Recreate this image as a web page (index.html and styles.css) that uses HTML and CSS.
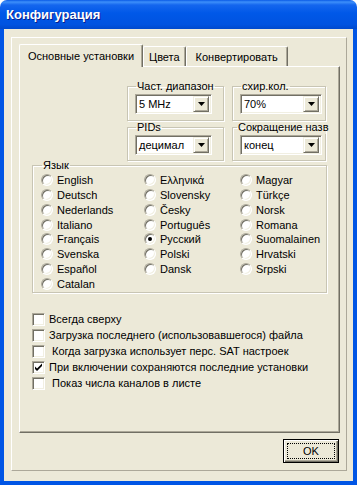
FILE: index.html
```html
<!DOCTYPE html>
<html lang="ru">
<head>
    <meta charset="UTF-8">
    <title>Конфигурация</title>
    <link rel="stylesheet" href="styles.css">
</head>
<body>

<div class="window">
    <div class="titlebar"><span class="title">Конфигурация</span></div>

    <div class="client">
        <div class="frame">
            <div class="tabs">
                <div class="tab tab-active">Основные установки</div>
                <div class="tab">Цвета</div>
                <div class="tab tab-convert">Конвертировать</div>
            </div>

            <div class="page">
                <div class="combos">
                    <fieldset class="group">
                        <legend>Част. диапазон</legend>
                        <div class="combo combo-a"><span class="combo-value">5 MHz</span><span class="combo-btn"><svg width="7" height="4" viewBox="0 0 7 4"><path d="M0 0h7L3.5 4z" fill="#000"/></svg></span></div>
                    </fieldset>
                    <fieldset class="group">
                        <legend>схир.кол.</legend>
                        <div class="combo combo-b"><span class="combo-value">70%</span><span class="combo-btn"><svg width="7" height="4" viewBox="0 0 7 4"><path d="M0 0h7L3.5 4z" fill="#000"/></svg></span></div>
                    </fieldset>
                    <fieldset class="group group-low">
                        <legend>PIDs</legend>
                        <div class="combo combo-a"><span class="combo-value">децимал</span><span class="combo-btn"><svg width="7" height="4" viewBox="0 0 7 4"><path d="M0 0h7L3.5 4z" fill="#000"/></svg></span></div>
                    </fieldset>
                    <fieldset class="group group-low">
                        <legend class="legend-wide">Сокращение назв</legend>
                        <div class="combo combo-b"><span class="combo-value">конец</span><span class="combo-btn"><svg width="7" height="4" viewBox="0 0 7 4"><path d="M0 0h7L3.5 4z" fill="#000"/></svg></span></div>
                    </fieldset>
                </div>

                <fieldset class="group lang">
                    <legend>Язык</legend>
                    <div class="radios">
                        <label class="radio"><span class="dot"></span>English</label>
                        <label class="radio"><span class="dot"></span>Ελληνικά</label>
                        <label class="radio"><span class="dot"></span>Magyar</label>
                        <label class="radio"><span class="dot"></span>Deutsch</label>
                        <label class="radio"><span class="dot"></span>Slovensky</label>
                        <label class="radio"><span class="dot"></span>Türkçe</label>
                        <label class="radio"><span class="dot"></span>Nederlands</label>
                        <label class="radio"><span class="dot"></span>Česky</label>
                        <label class="radio"><span class="dot"></span>Norsk</label>
                        <label class="radio"><span class="dot"></span>Italiano</label>
                        <label class="radio"><span class="dot"></span>Português</label>
                        <label class="radio"><span class="dot"></span>Romana</label>
                        <label class="radio"><span class="dot"></span>Français</label>
                        <label class="radio"><span class="dot dot-on"></span>Русский</label>
                        <label class="radio"><span class="dot"></span>Suomalainen</label>
                        <label class="radio"><span class="dot"></span>Svenska</label>
                        <label class="radio"><span class="dot"></span>Polski</label>
                        <label class="radio"><span class="dot"></span>Hrvatski</label>
                        <label class="radio"><span class="dot"></span>Español</label>
                        <label class="radio"><span class="dot"></span>Dansk</label>
                        <label class="radio"><span class="dot"></span>Srpski</label>
                        <label class="radio"><span class="dot"></span>Catalan</label>
                    </div>
                </fieldset>

                <ul class="checks">
                    <li><span class="box"></span>Всегда сверху</li>
                    <li><span class="box"></span>Загрузка последнего (использовавшегося) файла</li>
                    <li><span class="box"></span>&nbsp;Когда загрузка использует перс. SAT настроек</li>
                    <li><span class="box"><svg width="9" height="9" viewBox="0 0 9 9"><path d="M1 3.5l2 2 5-5v2.5L3 8 1 6z" fill="#000"/></svg></span>При включении сохраняются последние установки</li>
                    <li><span class="box"></span>&nbsp;Показ числа каналов в листе</li>
                </ul>
            </div>

            <div class="actions">
                <button class="btn">OK</button>
            </div>
        </div>
    </div>
</div>

</body>
</html>
```

FILE: styles.css
```css
body {
    margin: 0;
    font-family: "Liberation Sans", Arial, sans-serif;
    font-size: 11px;
    color: #000;
    background: #fff;
}
.window {
    width: 357px;
    height: 485px;
    display: flex;
    flex-direction: column;
}
.titlebar {
    height: 29px;
    flex: none;
    display: flex;
    align-items: center;
    padding-left: 6px;
    border-radius: 7px 7px 0 0;
    background: linear-gradient(#0a5ae6 0, #3d8ffa 2px, #1466ee 5px, #0058e8 45%, #0053e0 85%, #0049cc 100%);
}
.title {
    font-family: "Liberation Sans", Arial, sans-serif;
    font-weight: bold;
    font-size: 13px;
    color: #fff;
    text-shadow: 1px 1px 0 #0a1e8a;
}
.client {
    flex: 1;
    background-color: #ece9d8;
    border: 4px solid #0055e5;
    border-top: 0;
    padding: 8px 6px 10px 7px;
}
.frame {
    height: 434px;
    box-sizing: border-box;
    border: 1px solid;
    border-color: #fff #aca899 #aca899 #fff;
    padding: 6px 6px 7px 7px;
    display: flex;
    flex-direction: column;
}
.tabs {
    display: flex;
    align-items: flex-end;
    height: 22px;
}
.tab {
    height: 20px;
    box-sizing: border-box;
    padding: 0 5px;
    display: flex;
    align-items: center;
    border: 1px solid;
    border-color: #fff #716f64 transparent #fff;
    border-bottom: 0;
    border-radius: 2px 2px 0 0;
    box-shadow: inset -1px 0 0 #aca899;
}
.tab-convert {
    width: 102px;
    justify-content: center;
}
.tab-active {
    height: 23px;
    width: 124px;
    justify-content: center;
    margin-bottom: -1px;
    position: relative;
    z-index: 1;
    background-color: #ece9d8;
}
.page {
    height: 367px;
    box-sizing: border-box;
    border: 1px solid;
    border-color: #fff #716f64 #716f64 #fff;
    box-shadow: inset -1px -1px 0 #aca899;
}
.combos {
    display: grid;
    grid-template-columns: 97px 94px;
    column-gap: 8px;
    margin: 13px 0 0 107px;
}
.group {
    margin: 0;
    padding: 1px 0 6px 7px;
    min-width: 0;
    border: 1px solid #c8c5b4;
    box-shadow: 1px 1px 0 #fff, inset 1px 1px 0 #fff;
}
.group-low {
    padding-bottom: 5px;
}
.group legend {
    padding: 0 1px;
    margin-left: 1px;
    line-height: 13px;
    white-space: nowrap;
}
.legend-wide {
    margin-left: -3px !important;
    margin-right: -6px;
}
.combo {
    height: 20px;
    box-sizing: border-box;
    background: #fff;
    border: 1px solid;
    border-color: #aca899 #fff #fff #aca899;
    box-shadow: inset 1px 1px 0 #716f64, inset -1px -1px 0 #f1efe2;
    display: flex;
    align-items: center;
    padding: 0 2px 0 3px;
}
.combo-a {
    width: 77px;
}
.combo-b {
    width: 82px;
}
.combo-value {
    flex: 1;
}
.combo-btn {
    width: 16px;
    height: 16px;
    box-sizing: border-box;
    display: flex;
    align-items: center;
    justify-content: center;
    background-color: #ece9d8;
    border: 1px solid;
    border-color: #f1efe2 #716f64 #716f64 #f1efe2;
    box-shadow: inset 1px 1px 0 #fff, inset -1px -1px 0 #aca899;
}
.lang {
    margin: -2px 12px 0 12px;
    padding: 1px 0 1px 8px;
}
.radios {
    display: grid;
    grid-template-columns: 103px 96px 1fr;
    grid-auto-rows: 14.75px;
}
.radio {
    display: flex;
    align-items: center;
    gap: 4px;
    white-space: nowrap;
}
.dot {
    width: 12px;
    height: 12px;
    box-sizing: border-box;
    border-radius: 50%;
    border: 1px solid;
    border-color: #aca899 #fff #fff #aca899;
    background: #fff;
    box-shadow: inset 1px 1px 0 #716f64, inset -1px -1px 0 #f1efe2;
    display: flex;
    align-items: center;
    justify-content: center;
}
.dot-on::after {
    content: "";
    width: 4px;
    height: 4px;
    border-radius: 50%;
    background: #000;
}
.checks {
    list-style: none;
    margin: 18px 0 0 12px;
    padding: 0;
}
.checks li {
    height: 16px;
    display: flex;
    align-items: center;
    gap: 4px;
    white-space: nowrap;
}
.box {
    width: 13px;
    height: 13px;
    box-sizing: border-box;
    background: #fff;
    border: 1px solid;
    border-color: #aca899 #fff #fff #aca899;
    box-shadow: inset 1px 1px 0 #716f64, inset -1px -1px 0 #f1efe2;
    display: flex;
    align-items: center;
    justify-content: center;
}
.actions {
    display: flex;
    justify-content: flex-end;
    padding: 6px 1px 0 0;
}
.btn {
    width: 56px;
    height: 24px;
    font-family: "Liberation Sans", Arial, sans-serif;
    font-size: 11px;
    color: #000;
    background-color: #ece9d8;
    border: 1px solid #000;
    box-shadow: inset 1px 1px 0 #fff, inset -1px -1px 0 #716f64, inset -2px -2px 0 #aca899;
    outline: 1px dotted #000;
    outline-offset: -5px;
    padding: 0;
}
```
